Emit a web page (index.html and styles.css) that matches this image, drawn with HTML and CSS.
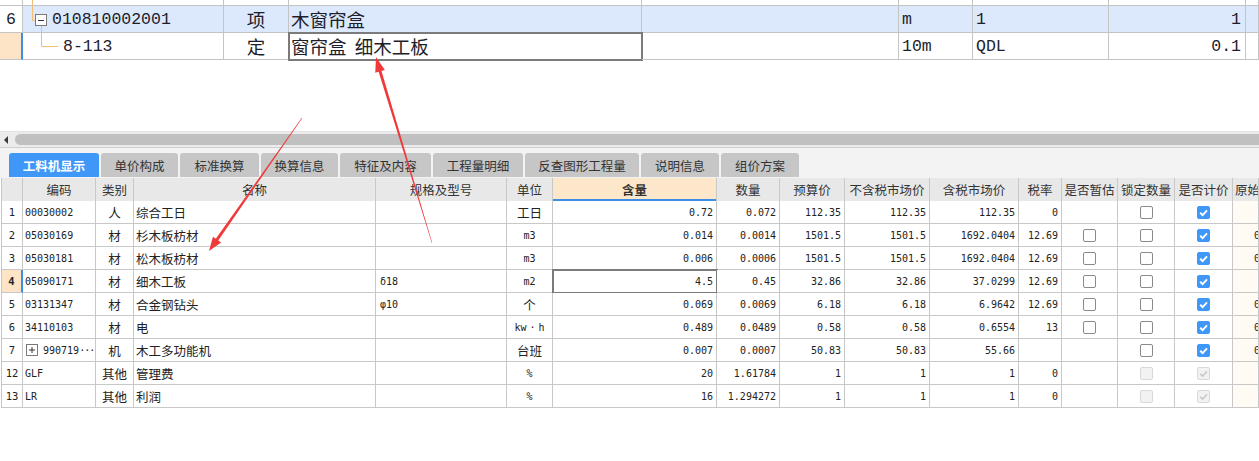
FILE: index.html
```html
<!DOCTYPE html>
<html lang="zh-CN">
<head>
<meta charset="utf-8">
<title>工料机显示</title>
<link rel="stylesheet" href="styles.css">
</head>
<body>
<div class="top">
  <div class="trow partial">
    <div class="rn"></div>
    <div class="code"><svg class="tree" width="29" height="5"><line x1="9.5" y1="0" x2="9.5" y2="5" stroke="#f3bd73"/></svg></div>
    <div></div><div></div><div></div><div></div><div></div><div></div><div></div>
  </div>
  <div class="trow main sel">
    <div class="rn lat">6</div>
    <div class="code">
      <svg class="tree" width="29" height="26">
        <line x1="9.5" y1="0" x2="9.5" y2="14.5" stroke="#f3bd73"/>
        <line x1="9.5" y1="14.5" x2="12" y2="14.5" stroke="#f3bd73"/>
        <line x1="18.5" y1="20" x2="18.5" y2="26" stroke="#f3bd73"/>
        <rect x="12.5" y="8.5" width="11" height="11" fill="#fff" stroke="#7a7a7a"/>
        <line x1="15" y1="14.5" x2="21" y2="14.5" stroke="#333"/>
      </svg>
      <span class="lat">010810002001</span>
    </div>
    <div class="ctr cjk">项</div>
    <div class="txt cjk">木窗帘盒</div>
    <div></div>
    <div class="txt lat">m</div>
    <div class="txt lat">1</div>
    <div class="rt lat">1</div>
    <div></div>
  </div>
  <div class="trow main">
    <div class="rn cur"></div>
    <div class="code">
      <svg class="tree" width="40" height="26">
        <line x1="18.5" y1="0" x2="18.5" y2="13.5" stroke="#f3bd73"/>
        <line x1="18.5" y1="13.5" x2="35" y2="13.5" stroke="#f3bd73"/>
      </svg>
      <span class="lat">8-113</span>
    </div>
    <div class="ctr cjk">定</div>
    <div class="txt cjk selcell">窗帘盒 细木工板</div>
    <div></div>
    <div class="txt lat">10m</div>
    <div class="txt lat">QDL</div>
    <div class="rt lat">0.1</div>
    <div></div>
  </div>
</div>

<div class="spacer"></div>

<div class="hscroll"><span class="arrowl"></span><div class="thumb"></div></div>

<div class="tabs">
  <div class="tab active w90">工料机显示</div>
  <div class="tab w77">单价构成</div>
  <div class="tab w79">标准换算</div>
  <div class="tab w77">换算信息</div>
  <div class="tab w91">特征及内容</div>
  <div class="tab w90">工程量明细</div>
  <div class="tab w114">反查图形工程量</div>
  <div class="tab w78">说明信息</div>
  <div class="tab w78">组价方案</div>
</div>

<div class="grid">
  <div class="hd"></div><div class="hd">编码</div><div class="hd">类别</div><div class="hd">名称</div><div class="hd">规格及型号</div><div class="hd">单位</div><div class="hd hl">含量</div><div class="hd">数量</div><div class="hd">预算价</div><div class="hd">不含税市场价</div><div class="hd">含税市场价</div><div class="hd">税率</div><div class="hd">是否暂估</div><div class="hd">锁定数量</div><div class="hd">是否计价</div><div class="hd left">原始价格</div>

  <div class="rn">1</div><div class="code">00030002</div><div class="cat">人</div><div class="name">综合工日</div><div class="spec"></div><div class="unit cj">工日</div><div class="n">0.72</div><div class="n">0.072</div><div class="n">112.35</div><div class="n">112.35</div><div class="n">112.35</div><div class="n">0</div><div class="ck"></div><div class="ck"><span class="box"></span></div><div class="ck"><span class="box on"><svg width="13" height="13"><path d="M3.2 6.8 L5.6 9.1 L10 4.4" fill="none" stroke="#fff" stroke-width="2"/></svg></span></div><div class="orig"></div>

  <div class="rn">2</div><div class="code">05030169</div><div class="cat">材</div><div class="name">杉木板枋材</div><div class="spec"></div><div class="unit">m3</div><div class="n">0.014</div><div class="n">0.0014</div><div class="n">1501.5</div><div class="n">1501.5</div><div class="n">1692.0404</div><div class="n">12.69</div><div class="ck"><span class="box"></span></div><div class="ck"><span class="box"></span></div><div class="ck"><span class="box on"><svg width="13" height="13"><path d="M3.2 6.8 L5.6 9.1 L10 4.4" fill="none" stroke="#fff" stroke-width="2"/></svg></span></div><div class="orig">0.27</div>

  <div class="rn">3</div><div class="code">05030181</div><div class="cat">材</div><div class="name">松木板枋材</div><div class="spec"></div><div class="unit">m3</div><div class="n">0.006</div><div class="n">0.0006</div><div class="n">1501.5</div><div class="n">1501.5</div><div class="n">1692.0404</div><div class="n">12.69</div><div class="ck"><span class="box"></span></div><div class="ck"><span class="box"></span></div><div class="ck"><span class="box on"><svg width="13" height="13"><path d="M3.2 6.8 L5.6 9.1 L10 4.4" fill="none" stroke="#fff" stroke-width="2"/></svg></span></div><div class="orig">0.27</div>

  <div class="rn cur">4</div><div class="code">05090171</div><div class="cat">材</div><div class="name">细木工板</div><div class="spec">δ18</div><div class="unit">m2</div><div class="n selcell">4.5</div><div class="n">0.45</div><div class="n">32.86</div><div class="n">32.86</div><div class="n">37.0299</div><div class="n">12.69</div><div class="ck"><span class="box"></span></div><div class="ck"><span class="box"></span></div><div class="ck"><span class="box on"><svg width="13" height="13"><path d="M3.2 6.8 L5.6 9.1 L10 4.4" fill="none" stroke="#fff" stroke-width="2"/></svg></span></div><div class="orig"></div>

  <div class="rn">5</div><div class="code">03131347</div><div class="cat">材</div><div class="name">合金钢钻头</div><div class="spec">φ10</div><div class="unit cj">个</div><div class="n">0.069</div><div class="n">0.0069</div><div class="n">6.18</div><div class="n">6.18</div><div class="n">6.9642</div><div class="n">12.69</div><div class="ck"><span class="box"></span></div><div class="ck"><span class="box"></span></div><div class="ck"><span class="box on"><svg width="13" height="13"><path d="M3.2 6.8 L5.6 9.1 L10 4.4" fill="none" stroke="#fff" stroke-width="2"/></svg></span></div><div class="orig">0.06</div>

  <div class="rn">6</div><div class="code">34110103</div><div class="cat">材</div><div class="name">电</div><div class="spec"></div><div class="unit">kw<span class="fwdot">·</span>h</div><div class="n">0.489</div><div class="n">0.0489</div><div class="n">0.58</div><div class="n">0.58</div><div class="n">0.6554</div><div class="n">13</div><div class="ck"><span class="box"></span></div><div class="ck"><span class="box"></span></div><div class="ck"><span class="box on"><svg width="13" height="13"><path d="M3.2 6.8 L5.6 9.1 L10 4.4" fill="none" stroke="#fff" stroke-width="2"/></svg></span></div><div class="orig">0.04</div>

  <div class="rn">7</div><div class="code"><span class="plus"><svg width="12" height="12"><rect x="0.5" y="0.5" width="11" height="11" fill="#fff" stroke="#7a7a7a"/><path d="M3 6 H9 M6 3 V9" stroke="#333"/></svg></span>990719<span class="dots">···</span></div><div class="cat">机</div><div class="name">木工多功能机</div><div class="spec"></div><div class="unit cj">台班</div><div class="n">0.007</div><div class="n">0.0007</div><div class="n">50.83</div><div class="n">50.83</div><div class="n">55.66</div><div class="n"></div><div class="ck"></div><div class="ck"><span class="box"></span></div><div class="ck"><span class="box on"><svg width="13" height="13"><path d="M3.2 6.8 L5.6 9.1 L10 4.4" fill="none" stroke="#fff" stroke-width="2"/></svg></span></div><div class="orig">0.35</div>

  <div class="rn">12</div><div class="code">GLF</div><div class="cat">其他</div><div class="name">管理费</div><div class="spec"></div><div class="unit">%</div><div class="n">20</div><div class="n">1.61784</div><div class="n">1</div><div class="n">1</div><div class="n">1</div><div class="n">0</div><div class="ck"></div><div class="ck"><span class="box dis"></span></div><div class="ck"><span class="box dis"><svg width="13" height="13"><path d="M3.2 6.8 L5.6 9.1 L10 4.4" fill="none" stroke="#c9c9c9" stroke-width="1.6"/></svg></span></div><div class="orig"></div>

  <div class="rn">13</div><div class="code">LR</div><div class="cat">其他</div><div class="name">利润</div><div class="spec"></div><div class="unit">%</div><div class="n">16</div><div class="n">1.294272</div><div class="n">1</div><div class="n">1</div><div class="n">1</div><div class="n">0</div><div class="ck"></div><div class="ck"><span class="box dis"></span></div><div class="ck"><span class="box dis"><svg width="13" height="13"><path d="M3.2 6.8 L5.6 9.1 L10 4.4" fill="none" stroke="#c9c9c9" stroke-width="1.6"/></svg></span></div><div class="orig"></div>
</div>

<svg class="overlay" width="1259" height="461" viewBox="0 0 1259 461">
  <polygon fill="#f03a3a" points="432.24,242.93 381.5,70.97 384.85,69.95 376,57 375.27,72.85 378.62,71.83 431.76,243.07"/>
  <polygon fill="#f03a3a" points="302.2,118.14 218.25,240.39 221.12,242.4 209,251 212.92,236.67 215.79,238.67 301.8,117.86"/>
</svg>
</body>
</html>
```

FILE: styles.css
```css
* { box-sizing: border-box; }

body {
  margin: 0;
  width: 1259px;
  height: 461px;
  overflow: hidden;
  position: relative;
  background: #fff;
  color: #222;
  font-family: "Noto Sans CJK SC", "Noto Sans", sans-serif;
}

/* ---------- upper list ---------- */
.trow {
  display: grid;
  grid-template-columns: 23px 201px 65px 353px 257px 74px 136px 137px 1fr;
}
.trow > div {
  border-right: 1px solid #c4c4c4;
  border-bottom: 1px solid #c4c4c4;
  display: flex;
  align-items: center;
  white-space: nowrap;
  overflow: hidden;
  color: #1d1d2b;
}
.trow.partial { height: 6px; }
.trow.main { height: 27px; }
.trow.sel > div { background: #dce8fc; }
.trow.sel > div.rn { background: #fff; }
.trow .rn { justify-content: center; }
.trow .rn.cur { background: #fde4c6; border-right: 2px solid #3d8ee6; }
.trow .code { overflow: visible; }
.trow .code .tree { flex: none; display: block; }
.trow .ctr { justify-content: center; }
.trow .txt { padding-left: 3px; }
.trow .rt { justify-content: flex-end; padding-right: 4px; }
.lat { font-family: "Liberation Mono", monospace; font-size: 16.5px; }
.cjk { font-family: "Noto Sans CJK SC", sans-serif; font-size: 18.5px; word-spacing: 4px; }
.trow .txt.cjk { padding-left: 2px; }

.selcell {
  outline: 2px solid #7b7b7b;
  outline-offset: -1px;
}

.spacer { height: 71px; }

/* ---------- horizontal scrollbar ---------- */
.hscroll {
  height: 17px;
  background: #ececec;
  border-top: 1px solid #e2e2e2;
  border-bottom: 1px solid #cfcfcf;
  display: flex;
  align-items: center;
  padding-left: 4px;
}
.arrowl {
  width: 0;
  height: 0;
  border-top: 4px solid transparent;
  border-bottom: 4px solid transparent;
  border-right: 4px solid #3a3a3a;
}
.thumb {
  flex: 1;
  height: 11px;
  margin-left: 7px;
  background: #c0c0c0;
  border-radius: 6px 0 0 6px;
}

/* ---------- tabs ---------- */
.tabs {
  height: 30px;
  background: #f3f3f3;
  display: flex;
  align-items: flex-end;
  gap: 2px;
  padding: 0 0 1px 9px;
}
.tab {
  height: 24px;
  background: #c6c6c6;
  border-radius: 3px 3px 0 0;
  display: flex;
  align-items: center;
  justify-content: center;
  font-size: 12.5px;
  color: #333;
}
.tab.active { background: #3f97f8; color: #fff; font-weight: bold; }
.w77 { width: 77px; }
.w78 { width: 78px; }
.w79 { width: 79px; }
.w90 { width: 90px; }
.w91 { width: 91px; }
.w114 { width: 114px; }

/* ---------- material grid ---------- */
.grid {
  display: grid;
  grid-template-columns: 21px 73px 38px 242px 131px 46px 164px 63px 65px 85px 89px 43px 56px 57px 58px 1fr;
  grid-auto-rows: 23px;
  margin-left: 1px;
  border-left: 1px solid #c6c6c6;
}
.grid > div {
  border-right: 1px solid #c8c8c8;
  border-bottom: 1px solid #c8c8c8;
  display: flex;
  align-items: center;
  white-space: nowrap;
  overflow: hidden;
  font-family: "DejaVu Sans Mono", monospace;
  font-size: 10px;
  color: #222;
  background: #fff;
}
.grid > .hd {
  height: 24px;
  background: #e8e8e8;
  justify-content: center;
  font-family: "Noto Sans CJK SC", sans-serif;
  font-size: 12.5px;
  color: #333;
}
.grid > .hd.hl {
  background: #fde7cb;
  font-weight: bold;
  box-shadow: inset 0 -2px 0 #3d8ee6;
}
.grid > .hd.left { justify-content: flex-start; padding-left: 2px; }
.grid > .rn { justify-content: center; font-size: 10.5px; }
.grid > .rn.cur { background: #fde4c6; font-weight: bold; border-right: 2px solid #3d8ee6; }
.grid > .code { padding-left: 2px; }
.grid > .cat, .grid > .name, .grid > .unit.cj {
  font-family: "Noto Sans CJK SC", sans-serif;
  font-size: 12.5px;
}
.grid > .cat { justify-content: center; }
.grid > .name { padding-left: 2px; }
.grid > .spec { padding-left: 4px; }
.grid > .unit { justify-content: center; }
.grid > .n { justify-content: flex-end; padding-right: 3px; }
.grid > .ck { justify-content: center; }
.grid > .orig { background: #fffaf4; padding-left: 21px; }
.fwdot { display: inline-block; width: 12px; text-align: center; }
.plus { display: inline-flex; margin: 0 5px 0 1px; }
.dots { letter-spacing: -1px; }

.box {
  width: 13px;
  height: 13px;
  border: 1px solid #8a8a8a;
  border-radius: 2px;
  background: #fff;
  display: flex;
  align-items: center;
  justify-content: center;
}
.box svg { display: block; flex: none; }
.box.on { background: #3f97f8; border-color: #3f97f8; }
.box.dis { background: #f2f2f2; border-color: #d9d9d9; }

/* ---------- annotation arrows ---------- */
.overlay {
  position: absolute;
  left: 0;
  top: 0;
  pointer-events: none;
}
```
